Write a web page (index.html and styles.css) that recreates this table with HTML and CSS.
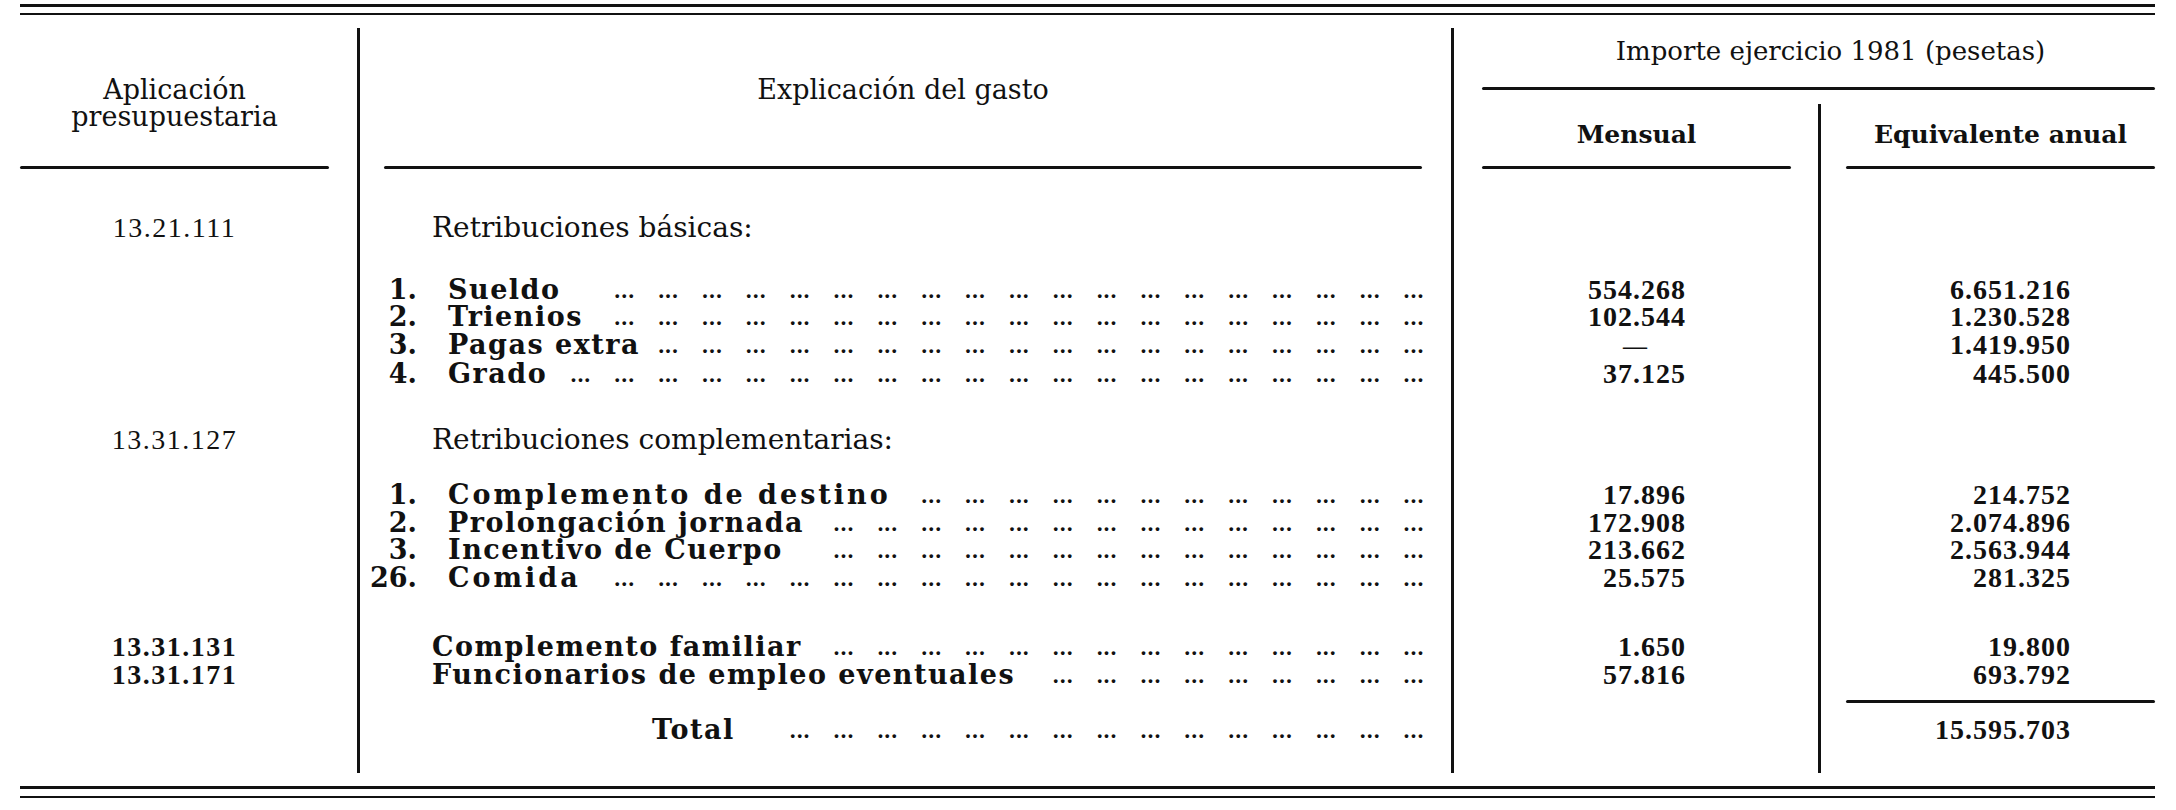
FILE: index.html
```html
<!DOCTYPE html>
<html lang="es">
<head>
<meta charset="utf-8">
<title>Importe ejercicio 1981 (pesetas)</title>
<link rel="stylesheet" href="styles.css">
<script src="script.js" defer></script>
</head>
<body>
<div class="sheet">
  <div class="double-rule top"></div>

  <div class="table">
    <div class="h-app">
      <div class="h-text">Aplicación<br>presupuestaria</div>
      <div class="rule"></div>
    </div>
    <div class="h-exp">
      <div class="h-text">Explicación del gasto</div>
      <div class="rule"></div>
    </div>
    <div class="h-imp">
      <div class="h-text">Importe ejercicio 1981 (pesetas)</div>
      <div class="rule"></div>
    </div>
    <div class="h-mens">
      <div class="h-text">Mensual</div>
      <div class="rule"></div>
    </div>
    <div class="h-equiv">
      <div class="h-text">Equivalente anual</div>
      <div class="rule"></div>
    </div>

    <div class="row r-sec1">
      <div class="cell c1">13.21.111</div>
      <div class="cell c2 sec">Retribuciones básicas:</div>
      <div class="cell c3"></div>
      <div class="cell c4"></div>
    </div>

    <div class="row r-first">
      <div class="cell c1"></div>
      <div class="cell c2 item"><span class="num">1.</span><span class="label">Sueldo</span><span class="leader"><span>... ... ... ... ... ... ... ... ... ... ... ... ... ... ...</span></span></div>
      <div class="cell c3">554.268</div>
      <div class="cell c4">6.651.216</div>
    </div>
    <div class="row">
      <div class="cell c1"></div>
      <div class="cell c2 item"><span class="num">2.</span><span class="label">Trienios</span><span class="leader"><span>... ... ... ... ... ... ... ... ... ... ... ... ... ... ...</span></span></div>
      <div class="cell c3">102.544</div>
      <div class="cell c4">1.230.528</div>
    </div>
    <div class="row">
      <div class="cell c1"></div>
      <div class="cell c2 item"><span class="num">3.</span><span class="label">Pagas extra</span><span class="leader"><span>... ... ... ... ... ... ... ... ... ... ... ... ... ...</span></span></div>
      <div class="cell c3"><span class="dash">—</span></div>
      <div class="cell c4">1.419.950</div>
    </div>
    <div class="row">
      <div class="cell c1"></div>
      <div class="cell c2 item"><span class="num">4.</span><span class="label">Grado</span><span class="leader"><span>... ... ... ... ... ... ... ... ... ... ... ... ... ... ...</span></span></div>
      <div class="cell c3">37.125</div>
      <div class="cell c4">445.500</div>
    </div>

    <div class="row r-sec2">
      <div class="cell c1">13.31.127</div>
      <div class="cell c2 sec">Retribuciones complementarias:</div>
      <div class="cell c3"></div>
      <div class="cell c4"></div>
    </div>

    <div class="row r-first2">
      <div class="cell c1"></div>
      <div class="cell c2 item"><span class="num">1.</span><span class="label spaced-a">Complemento de destino</span><span class="leader"><span>... ... ... ... ... ... ... ... ... ... ...</span></span></div>
      <div class="cell c3">17.896</div>
      <div class="cell c4">214.752</div>
    </div>
    <div class="row">
      <div class="cell c1"></div>
      <div class="cell c2 item"><span class="num">2.</span><span class="label">Prolongación jornada</span><span class="leader"><span>... ... ... ... ... ... ... ... ... ... ... ...</span></span></div>
      <div class="cell c3">172.908</div>
      <div class="cell c4">2.074.896</div>
    </div>
    <div class="row">
      <div class="cell c1"></div>
      <div class="cell c2 item"><span class="num">3.</span><span class="label">Incentivo de Cuerpo</span><span class="leader"><span>... ... ... ... ... ... ... ... ... ... ... ...</span></span></div>
      <div class="cell c3">213.662</div>
      <div class="cell c4">2.563.944</div>
    </div>
    <div class="row">
      <div class="cell c1"></div>
      <div class="cell c2 item"><span class="num">26.</span><span class="label spaced-b">Comida</span><span class="leader"><span>... ... ... ... ... ... ... ... ... ... ... ... ... ...</span></span></div>
      <div class="cell c3">25.575</div>
      <div class="cell c4">281.325</div>
    </div>

    <div class="row r-fam">
      <div class="cell c1 bold">13.31.131</div>
      <div class="cell c2 fam"><span class="label">Complemento familiar</span><span class="leader"><span>... ... ... ... ... ... ... ... ... ... ... ...</span></span></div>
      <div class="cell c3">1.650</div>
      <div class="cell c4">19.800</div>
    </div>
    <div class="row">
      <div class="cell c1 bold">13.31.171</div>
      <div class="cell c2 fam"><span class="label">Funcionarios de empleo eventuales</span><span class="leader"><span>... ... ... ... ... ... ... ... ...</span></span></div>
      <div class="cell c3">57.816</div>
      <div class="cell c4">693.792</div>
    </div>

    <div class="row r-total">
      <div class="cell c1"></div>
      <div class="cell c2 total"><span class="label">Total</span><span class="leader"><span>... ... ... ... ... ... ... ... ... ... ... ... ... ...</span></span></div>
      <div class="cell c3"></div>
      <div class="cell c4 tot"><div class="rule tot-rule"></div><div class="tot-num">15.595.703</div></div>
    </div>
  </div>

  <div class="double-rule bottom"></div>
</div>
</body>
</html>
```

FILE: styles.css
```css
* {
  box-sizing: border-box;
}

html,
body {
  margin: 0;
  padding: 0;
  background: #ffffff;
}

body {
  color: #111111;
  font-family: "DejaVu Serif", "Liberation Serif", serif;
}

.sheet {
  width: 2176px;
  height: 810px;
  padding: 4px 21px 0 20px;
}

/* double horizontal rules */
.double-rule {
  height: 11px;
  border-top: 3px solid #111111;
  border-bottom: 2px solid #111111;
}

.double-rule.bottom {
  margin-top: 13px;
  height: 12px;
}

.rule {
  height: 3px;
  background: #111111;
  border-radius: 2px;
}

/* main grid */
.table {
  margin-top: 13px;
  display: grid;
  grid-template-columns: 337px 1094px 367px 337px;
}

/* header */
.h-app {
  grid-column: 1;
  grid-row: span 2;
  display: flex;
  flex-direction: column;
  padding: 48px 28px 1px 0;
}

.h-app .h-text {
  text-align: center;
  font-size: 27px;
  line-height: 27px;
}

.h-exp {
  grid-column: 2;
  grid-row: span 2;
  display: flex;
  flex-direction: column;
  border-left: 3px solid #111111;
  padding: 47px 29px 1px 24px;
}

.h-exp .h-text {
  text-align: center;
  font-size: 27px;
  line-height: 30px;
}

.h-app .rule,
.h-exp .rule,
.h-imp .rule,
.h-mens .rule,
.h-equiv .rule {
  margin-top: auto;
}

.h-imp {
  grid-column: 3 / span 2;
  height: 62px;
  display: flex;
  flex-direction: column;
  border-left: 3px solid #111111;
  padding-left: 28px;
}

.h-imp .h-text {
  margin-top: 8px;
  padding-left: 24px;
  text-align: center;
  font-size: 26px;
  line-height: 30px;
}

.h-mens {
  grid-column: 3;
  height: 80px;
  display: flex;
  flex-direction: column;
  border-left: 3px solid #111111;
  padding: 0 27px 1px 28px;
}

.h-equiv {
  grid-column: 4;
  margin-top: 14px;
  height: 66px;
  display: flex;
  flex-direction: column;
  border-left: 3px solid #111111;
  padding: 0 0 1px 25px;
}

.h-mens .h-text,
.h-equiv .h-text {
  text-align: center;
  font-size: 25px;
  font-weight: bold;
  line-height: 30px;
}

.h-mens .h-text {
  margin-top: 30px;
}

.h-equiv .h-text {
  margin-top: 16px;
}

/* body rows */
.row {
  display: contents;
}

.cell {
  line-height: 27.5px;
  white-space: nowrap;
}

.c1 {
  text-align: center;
  padding-right: 28px;
  font-family: "Liberation Serif", serif;
  font-size: 28px;
  letter-spacing: 1.5px;
}

.c1.bold {
  font-weight: bold;
}

.c2 {
  border-left: 3px solid #111111;
  padding-right: 27px;
}

.c3,
.c4 {
  border-left: 3px solid #111111;
  text-align: right;
  font-family: "Liberation Serif", serif;
  font-size: 28px;
  font-weight: bold;
  letter-spacing: 1px;
}

.c3 {
  padding-right: 132px;
}

.c4 {
  padding-right: 84px;
}

.dash {
  display: inline-block;
  margin-right: 38px;
  font-size: 24px;
}

.c2.sec {
  padding-left: 72px;
  font-size: 28px;
}

.c2.item,
.c2.fam,
.c2.total {
  display: flex;
  align-items: flex-start;
}

.c2.fam {
  padding-left: 72px;
}

.c2.total {
  padding-left: 292px;
}

.num {
  flex: none;
  width: 57px;
  text-align: right;
  font-size: 27px;
  font-weight: bold;
}

.label {
  flex: none;
  font-size: 27px;
  font-weight: bold;
  letter-spacing: 1.5px;
}

.label.spaced-a {
  letter-spacing: 3px;
}

.label.spaced-b {
  letter-spacing: 3px;
}

.item .label {
  margin-left: 31px;
}

.leader {
  flex: 1;
  min-width: 0;
  height: 27.5px;
  padding-top: 2px;
  overflow: hidden;
  display: flex;
  justify-content: flex-end;
  margin-left: 12px;
  font-size: 20px;
  font-weight: bold;
  word-spacing: 16px;
  line-height: 27.5px;
}

.leader > span {
  flex: none;
}

/* vertical spacing between groups */
.r-sec1 > .cell {
  padding-top: 44px;
}

.r-first > .cell {
  padding-top: 34px;
}

.r-sec2 > .cell {
  padding-top: 38px;
}

.r-first2 > .cell {
  padding-top: 28px;
}

.r-fam > .cell {
  padding-top: 42px;
}

.r-total > .cell {
  padding-top: 28px;
  padding-bottom: 29px;
}

.r-total > .c4.tot {
  padding-top: 12px;
}

.tot-rule {
  margin-left: 25px;
  margin-right: -84px;
  margin-bottom: 13px;
}
```

FILE: script.js
```js
(function () {
  function fill() {
    var leaders = document.querySelectorAll('.leader');
    for (var i = 0; i < leaders.length; i++) {
      var el = leaders[i];
      var span = el.firstElementChild;
      if (!span) continue;
      var avail = el.clientWidth;
      span.textContent = '...';
      var one = span.getBoundingClientRect().width;
      span.textContent = '... ...';
      var pitch = span.getBoundingClientRect().width - one;
      var n = 1;
      if (pitch > 0) {
        n = Math.max(1, Math.floor((avail - one) / pitch) + 1);
      }
      var parts = [];
      for (var k = 0; k < n; k++) {
        parts.push('...');
      }
      span.textContent = parts.join(' ');
    }
  }
  if (document.readyState === 'loading') {
    document.addEventListener('DOMContentLoaded', fill);
  } else {
    fill();
  }
})();
```
